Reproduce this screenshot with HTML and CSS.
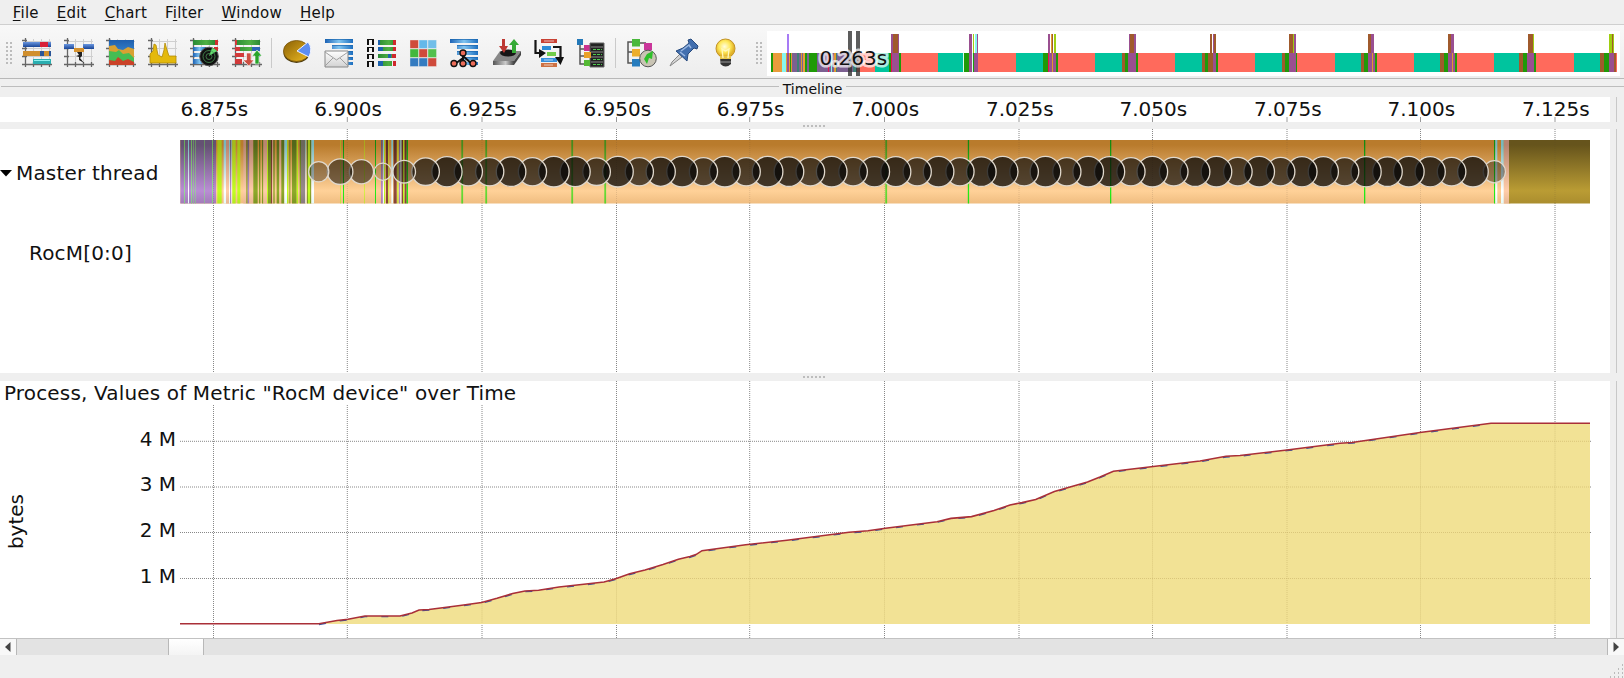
FILE: index.html
```html
<!DOCTYPE html>
<html lang="en">
<head>
<meta charset="utf-8">
<title>Timeline</title>
<link rel="stylesheet" href="styles.css">
</head>
<body>
<svg class="defs" width="0" height="0" aria-hidden="true">
  <defs>
    <linearGradient id="blue" x1="0" x2="1"><stop offset="0" stop-color="#1d62b5"/><stop offset=".5" stop-color="#7fc4f0"/><stop offset="1" stop-color="#1d6fc0"/></linearGradient>
    <linearGradient id="royal" x1="0" x2="0" y1="0" y2="1"><stop offset="0" stop-color="#6a97e0"/><stop offset="1" stop-color="#1a4596"/></linearGradient>
    <linearGradient id="green" x1="0" x2="1"><stop offset="0" stop-color="#2a8a35"/><stop offset=".6" stop-color="#4fb043"/><stop offset="1" stop-color="#2a8a35"/></linearGradient>
    <linearGradient id="gold" x1="0" x2="1" y1="0" y2="1"><stop offset="0" stop-color="#8a6005"/><stop offset="1" stop-color="#eebb22"/></linearGradient>
    <linearGradient id="sky" x1="0" x2="0" y1="0" y2="1"><stop offset="0" stop-color="#1f5fae"/><stop offset="1" stop-color="#4aa3e6"/></linearGradient>
    <radialGradient id="bulb" cx=".45" cy=".4"><stop offset="0" stop-color="#fffde0"/><stop offset=".6" stop-color="#ffe95a"/><stop offset="1" stop-color="#e2b32a"/></radialGradient>
    <linearGradient id="paper" x1="0" x2="0" y1="0" y2="1"><stop offset="0" stop-color="#fff"/><stop offset="1" stop-color="#d2d2d2"/></linearGradient>
    <linearGradient id="metal" x1="0" x2="1"><stop offset="0" stop-color="#555"/><stop offset=".6" stop-color="#ccc"/><stop offset="1" stop-color="#444"/></linearGradient>
    <g id="mesh" fill="none"><path d="M11.5 1V28M19.5 1V28M27.5 1V28M3 3.5H29M3 10.5H29M3 18.5H29" stroke="#cfcfcf"/><path d="M3.5 0V29M0 26.5H30M0 2.5H5M0 10.5H5M0 18.5H5M11.5 24V29M19.5 24V29M27.5 24V29" stroke="#666" stroke-width="1.3"/></g>
    <g id="lines"><path d="M0 1H28V5H0zM7 7H28V11H7zM7 13H28V17H7zM12 19H28V22H12zM14 24H28V27H14z" fill="url(#blue)"/><path d="M0 1.5H28M7 7.5H28M7 13.5H28M12 19.5H28" stroke="#1a65af" stroke-width=".7"/></g>
  </defs>
</svg>

<nav class="menu">
  <span><u>F</u>ile</span><span><u>E</u>dit</span><span><u>C</u>hart</span><span>F<u>i</u>lter</span><span><u>W</u>indow</span><span><u>H</u>elp</span>
</nav>

<header class="toolbar">
  <i class="grip"></i>
  <div class="icons">
    <svg viewBox="0 0 30 30"><use href="#mesh"/><path d="M1 4H29V9H1z" fill="url(#royal)"/><path d="M18 4H26V9H18z" fill="#d82038"/><path d="M1 13H29V18H1z" fill="#d08f2e"/><path d="M18 13H22V18H18zM27 13H29V18H27z" fill="#2a5598"/><path d="M11 21H29V26H11z" fill="#2baeb0"/><path d="M12 22.5H28" stroke="#8df0ef"/></svg>
    <svg viewBox="0 0 30 30"><use href="#mesh"/><path d="M0 6H10V11H0zM19 6H30V11H19z" fill="url(#royal)"/><path d="M10 10H20V14H10z" fill="#d6922e"/><path d="M13 14H18V18L16 20 20 25 15 22 15 19 12 18 15 17z" fill="#222"/></svg>
    <svg viewBox="0 0 30 30"><use href="#mesh"/><path d="M3 2H28V27H3z" fill="url(#sky)"/><path d="M3 8L9 7 12 11 17 12 22 9 28 11V22H3z" fill="#d8a132"/><path d="M3 13L10 14 13 12 17 16 23 15 28 20V26H3z" fill="#45bd53"/><path d="M3 22L9 23 12 19 17 23 22 21 28 24V27H3z" fill="#ca4228"/></svg>
    <svg viewBox="0 0 30 30"><use href="#mesh"/><path d="M2 25V16L5 13 6 6 8 7 10 17 14 19 16 12 17 5 19 12 21 18 28 18V25z" fill="#e4b90c" stroke="#b38b05" stroke-width=".8"/></svg>
    <svg viewBox="0 0 30 30"><use href="#mesh"/><path d="M3 2H25V7H3z" fill="url(#green)"/><path d="M25 2H28V7H25zM24 9H28V13H24z" fill="#cf3030"/><path d="M3 9H16V13H3zM3 15H12V19H3zM3 21H12V26H3z" fill="url(#blue)"/><circle cx="19" cy="18.500" r="9.300" fill="#111" stroke="#555"/><path d="M19 18L27 13A9 9 0 0 0 22 10z" fill="#65e070"/><g fill="none" stroke="#4a9355" stroke-width=".8"><circle cx="19" cy="18.500" r="3"/><circle cx="19" cy="18.500" r="6"/></g></svg>
    <svg viewBox="0 0 30 30"><use href="#mesh"/><path d="M3 2H28V7H3zM8 9H20V13H8z" fill="url(#green)"/><path d="M3 2H5V7H3zM3 9H8V13H3zM3 15H12V19H3zM3 21H10V26H3z" fill="#d23a3a"/><path d="M20 9H28V13H20zM23 15H28V19H23z" fill="#2b66b5"/><path d="M14.500 15H19V22H22L17 28 11 22H14.500z" fill="#ce4f42" stroke="#fff" stroke-width=".6"/><path d="M23 26V18H20L25 12 30 18H27V26z" fill="#28a42b" stroke="#fff" stroke-width=".6"/></svg>
  </div>
  <i class="sep"></i>
  <div class="icons">
    <svg viewBox="0 0 30 30"><ellipse cx="14.500" cy="15" rx="13" ry="10" fill="#4c3c10"/><ellipse cx="14.500" cy="13" rx="13" ry="10.500" fill="url(#gold)" stroke="#795407" stroke-width=".8"/><path d="M15 13L26 4Q31 10 27 19z" fill="#5d8df0" stroke="#f0f3ff"/></svg>
    <svg viewBox="0 0 30 30"><g transform="translate(1 0)"><use href="#lines"/></g><path d="M1 13H24V29H1z" fill="url(#paper)" stroke="#888"/><path d="M1 14L12.500 22 24 14M1 28L9 20M24 28L16 20" fill="none" stroke="#a0a0a0"/></svg>
    <svg viewBox="0 0 30 30"><path d="M1 1H3V7H1zM6 1H8V7H6zM1 9H3V14H1zM6 9H8V14H6zM1 16H3V21H1zM6 16H8V21H6zM1 23H3V29H1zM6 23H8V29H6zM1 1H8V2H1zM1 9H8V10H1zM1 16H8V17H1zM1 23H8V24H1z" fill="#111"/><path d="M12 2H30V7H12zM16 9H29V13H16zM12 16H30V20H12zM17 23H26V28H17z" fill="url(#green)"/><path d="M12 2H14V7H12zM12 9H17V13H12zM22 16H25V20H22zM12 23H17V28H12z" fill="#1d63ae"/><path d="M27 2H30V7H27zM27 9H30V13H27zM26 16H30V20H26zM27 23H30V28H27z" fill="#cf282d"/></svg>
    <svg viewBox="0 0 30 30"><g stroke="#eee" stroke-width=".4"><path d="M2 2H10.500V10.500H2zM11 11H19.500V19.500H11zM20 20H28.500V28.500H20z" fill="#cf4a3b"/><path d="M11 2H19.500V10.500H11z" fill="#65b8ea"/><path d="M20 2H28.500V10.500H20z" fill="#71bee9"/><path d="M2 11H10.500V19.500H2z" fill="#42b83d"/><path d="M20 11H28.500V19.500H20z" fill="#54c04d"/><path d="M2 20H10.500V28.500H2zM11 20H19.500V28.500H11z" fill="#347bc0"/></g></svg>
    <svg viewBox="0 0 30 30"><use href="#lines"/><path d="M13 15V20L5 26M13 18L22 26M13 17V26" fill="none" stroke="#111" stroke-width="2"/><g fill="#ed6d59" stroke="#111" stroke-width="1.400"><circle cx="13" cy="15" r="3"/><circle cx="4" cy="25.500" r="3"/><circle cx="13" cy="25.500" r="3"/><circle cx="23" cy="25.500" r="3"/></g></svg>
    <svg viewBox="0 0 30 30"><path d="M1 23L8 13H29L22 23z" fill="#888"/><path d="M1 23H22V27H1z" fill="url(#metal)"/><path d="M22 23L29 13V17L22 27z" fill="#444"/><ellipse cx="16" cy="15" rx="8" ry="3.500" fill="#151515"/><path d="M10 1H13V8H16L12 15 7 8H10z" fill="#bd3832"/><path d="M20 15V7H17L22 1 27 7H24V15z" fill="#35aa36"/></svg>
    <svg viewBox="0 0 30 30"><path d="M7 1H23V5H7z" fill="#c84134"/><path d="M8 8H17V12H8z" fill="#2e8dd8"/><path d="M13 14H22V18H13z" fill="#71cc49"/><path d="M7 20H23V24H7z" fill="#348fdd"/><path d="M7 25H23V29H7z" fill="#cc7144"/><path d="M10 3H20M10 22H19M10 27H19" stroke="#fff" stroke-opacity=".65"/><path d="M1.500 2V15H7M19 9H26.500V20" fill="none" stroke="#151515" stroke-width="2.200"/><path d="M5 11L12 15 5 20zM21 19H30L26.500 27z" fill="#111"/></svg>
    <svg viewBox="0 0 30 30"><path d="M4 7V26H9M4 11H9M4 18H9" fill="none" stroke="#555" stroke-width="1.500"/><path d="M1 1H7V7H1z" fill="#2278b8"/><path d="M8 7H14V13H8z" fill="#c8328f"/><path d="M14 5H28V29H14z" fill="#222" stroke="#666"/><path d="M15 9H27M15 14H27M15 19H27M15 24H27" stroke="#888"/><path d="M17 11.500H26M17 16.500H26M17 21.500H26M17 26.500H26" stroke="#4fc94f" stroke-dasharray="3 1"/><path d="M8 14H15V20H8z" fill="#eaa127"/><path d="M8 22H14V28H8z" fill="#54b934"/></svg>
  </div>
  <i class="sep"></i>
  <div class="icons last">
    <svg viewBox="0 0 30 30"><path d="M7 4H1V25H6M1 14H6M13 5H19" fill="none" stroke="#555" stroke-width="1.500"/><path d="M5 1H13V8.500H5z" fill="#48b83a"/><path d="M5 11H13V18.500H5z" fill="#ecae2c"/><path d="M5 21H13V28.500H5z" fill="#267cbe"/><path d="M17 5H25V12H17z" fill="#ca369b"/><circle cx="21" cy="20.500" r="8.300" fill="#c9c4b4" stroke="#555"/><path d="M17 21L20 16 26 13 25 21 22 20 20 26z" fill="#2ec02a"/></svg>
    <svg viewBox="0 0 30 30"><path d="M1 28L3 24 11 16 13 19z" fill="#d5d5d5" stroke="#888"/><path d="M7 13L14 10 20 5 19 2 22 1 29 8 28 11 25 10 19 16 18 23z" fill="#426faf" stroke="#274a7d"/><path d="M12 13L20 7 22 10M11 14L16 18" fill="none" stroke="#9ab8e2" stroke-width="1.500"/></svg>
    <svg viewBox="0 0 30 30"><path d="M9 18H20V26Q14.500 31 9.500 26z" fill="#333"/><path d="M9 24H20" stroke="#999"/><circle cx="14.500" cy="10.500" r="9.500" fill="url(#bulb)" stroke="#c29325"/><path d="M9 18H20V21H9z" fill="#e8c84c"/><path d="M12 20L11 11 14.500 13 18 11 17 20" fill="none" stroke="#fff9bd" stroke-width="1.300"/></svg>
  </div>
  <i class="grip"></i>
  <svg class="overview" id="overview" viewBox="767 31 853 45" shape-rendering="crispEdges"></svg>
</header>

<div class="dock-title"><span>Timeline</span></div>

<main>
  <section class="ruler pane">
    <svg class="wide" id="ruler" viewBox="0 97 1610 25"></svg>
  </section>
  <div class="splitter"><i></i></div>
  <section class="threads pane">
    <div class="names">
      <div class="master"><svg viewBox="0 0 12 7"><path d="M0 0H12L6 6.500z"/></svg>Master thread</div>
      <div class="rocm">RocM[0:0]</div>
    </div>
    <svg class="plot" id="threads" viewBox="180 129 1430 244"></svg>
  </section>
  <div class="splitter lower"><i></i></div>
  <section class="metric pane">
    <h1>Process, Values of Metric "RocM device" over Time</h1>
    <div class="chart">
      <div class="unit"><span>bytes</span></div>
      <div class="ticks"><span>4 M</span><span>3 M</span><span>2 M</span><span>1 M</span></div>
      <svg class="plot" id="metric" viewBox="180 405 1430 233"></svg>
    </div>
  </section>
</main>

<div class="scrollbar">
  <span class="arrow"><svg viewBox="0 0 6 10"><path d="M5.500 0V10L0 5z"/></svg></span>
  <span class="trough before"></span><span class="handle"></span><span class="trough after"></span>
  <span class="arrow"><svg viewBox="0 0 6 10"><path d="M.5 0V10L6 5z"/></svg></span>
</div>
<footer><svg viewBox="0 0 14 14"><path d="M12 1h1M8 5h1M12 5h1M4 9h1M8 9h1M12 9h1M0 13h1M4 13h1M8 13h1M12 13h1" stroke="#aaa" stroke-width="1.500"/></svg></footer>
<script src="charts.js"></script>
</body>
</html>
```
FILE: styles.css
```css
* { box-sizing: border-box; }
body {
  margin: 0;
  width: 1624px;
  height: 678px;
  overflow: hidden;
  display: flex;
  flex-direction: column;
  background: #efefef;
  color: #111;
  font-family: "DejaVu Sans", sans-serif;
  font-size: 20px;
}
svg { display: block; flex: none; }
.defs { position: absolute; }
.menu {
  height: 25px;
  padding-left: 12.800px;
  display: flex;
  gap: 18.100px;
  font-size: 15px;
  letter-spacing: 0.200px;
  line-height: 26px;
  border-bottom: 1px solid #cfcfcf;
  flex: none;
}
.menu u { text-underline-offset: 2px; text-decoration-thickness: 1px; }
.toolbar {
  height: 54px;
  display: flex;
  align-items: center;
  padding: 2px 0 0 6px;
  background: linear-gradient(#f8f8f8, #ededed);
  border-bottom: 1.500px solid #b8b8b8;
  flex: none;
}
.grip {
  width: 7px;
  height: 23px;
  background: radial-gradient(circle, #bcbcbc 0.800px, transparent 1.100px) -1px 0 / 4px 4px;
}
.icons { display: flex; gap: 12px; margin-left: 9px; }
.icons svg { width: 30px; height: 30px; }
.sep { width: 1px; height: 30px; background: #cacaca; margin-left: 9px; }
.icons + .sep + .icons { margin-left: 10px; }
.icons + .sep + .icons.last { margin-left: 11px; }
.icons.last + .grip { margin-left: 15px; }
.overview { width: 853px; height: 45px; margin: 2px 0 0 4px; background: #fff; }
.dock-title {
  height: 18px;
  display: flex;
  align-items: center;
  gap: 4px;
  font-size: 14px;
  line-height: 16px;
  padding-left: 1px;
  flex: none;
}
.dock-title span { padding-top: 1px; }
.dock-title::before, .dock-title::after {
  content: "";
  flex: 1;
  height: 1px;
  background: #bdbdbd;
  margin-bottom: 3px;
}
main { flex: none; width: 1617px; }
.pane { position: relative; background: #fff; border-right: 1px solid #c8c8c8; box-shadow: inset -6px 0 #efefef; }
.ruler { height: 25px; }
.wide { width: 1610px; height: 25px; }
.splitter { height: 7px; display: flex; align-items: center; padding-left: 803px; }
.splitter.lower { height: 8px; }
.splitter i { width: 22px; height: 2px; background: repeating-linear-gradient(90deg, #bdbdbd 0 2px, transparent 2px 4px); }
.threads { height: 244px; display: flex; }
.names { width: 180px; padding-top: 29px; line-height: 30px; letter-spacing: 0.180px; }
.master { display: flex; align-items: center; gap: 4px; height: 30px; letter-spacing: 0.180px; white-space: nowrap; }
.master svg { width: 12px; height: 7px; }
.rocm { padding: 50px 0 0 29px; }
.plot { width: 1430px; }
.metric { height: 257px; }
.metric h1 { margin: 0; padding-left: 4px; height: 24px; font-size: 20px; font-weight: 400; line-height: 24px; letter-spacing: 0.155px; }
.chart { display: flex; height: 233px; }
.unit { width: 32px; display: flex; align-items: flex-end; padding: 0 0 89px 2px; }
.unit span { writing-mode: vertical-rl; transform: rotate(180deg); line-height: 28px; }
.ticks { width: 148px; padding: 11.500px 4px 0 0; text-align: right; line-height: 45.700px; display: flex; flex-direction: column; }
.scrollbar { height: 17px; display: flex; background: #e3e3e3; border-top: 1px solid #c2c2c2; flex: none; }
.arrow { width: 16px; display: flex; align-items: center; justify-content: center; background: #f8f8f8; }
.arrow svg { width: 6px; height: 10px; fill: #444; }
.trough { border: solid #b8b8b8; border-width: 0 1px; }
.before { width: 153px; }
.handle { width: 34px; background: linear-gradient(#fff, #f4f4f4); }
.after { flex: 1; }
footer { flex: 1; display: flex; justify-content: flex-end; align-items: flex-end; }
footer svg { width: 14px; height: 14px; }
.axis { fill: #111; text-anchor: middle; }
.duration { fill: #111; stroke: #fff; stroke-opacity: .7; stroke-width: 5px; stroke-linejoin: round; paint-order: stroke; }
```
FILE: charts.js
```javascript
const NS = "http://www.w3.org/2000/svg";
function add(parent, name, attrs, text) {
  const el = document.createElementNS(NS, name);
  for (const k in attrs) el.setAttribute(k, attrs[k]);
  if (text) el.textContent = text;
  parent.appendChild(el);
  return el;
}
const byId = id => document.getElementById(id);
const gridX = [213.5, 347.3, 482, 616.5, 749.7, 884.5, 1019, 1152.5, 1287, 1420.5, 1555];

// Overview strip: each entry is [colour key, end position] in thirds of a pixel.
const flat = { r: "#ff6a5c", t: "#00c49e", g: "#1f9a08", p: "#9a4f90", b: "#a05a2c", w: "#d8fff0", y: "#e09a30", o: "#e99c3c", c: "#86f5ee", s: "#7c6091", k: "#3f7f76", l: "#9fce10", n: "#e91050", v: "#a77bf5" };
const overview = byId("overview");
function strip(base, start, items, y, h) {
  let from = start;
  for (const [key, to] of items) {
    if (key !== "_") add(overview, "rect", { x: base + from / 3, y, width: (to - from) / 3, height: h, fill: flat[key] });
    from = to;
  }
}
strip(760, 33, [["g",40],["o",66],["c",77],["y",82],["p",86],["y",90],["g",93],["y",97],["s",112],["k",118],["s",123],["y",126],["s",129],["o",135],["g",140],["s",148],["g",164],["g",171],["s",205],["n",208],["s",213],["c",217],["s",223],["y",228],["k",231],["s",278],["k",290],["r",345],["t",388],["g",393],["n",397],["p",418],["g",423],["r",533],["t",610],["w",613],["g",628],["p",635],["w",638],["g",643],["p",655],["r",768],["t",848],["g",863],["n",867],["p",876],["y",879],["p",888],["g",893],["r",1005],["t",1085],["b",1096],["g",1105],["p",1127],["g",1133],["r",1245],["t",1290]], 53, 19);
strip(1190, 0, [["t",35],["b",46],["g",54],["b",68],["p",78],["g",84],["r",196],["t",275],["b",286],["g",297],["p",317],["g",321],["r",435],["t",512],["b",523],["g",534],["p",545],["y",549],["p",556],["g",560],["r",671],["t",751],["b",762],["g",773],["p",785],["y",789],["p",795],["g",800],["r",911],["t",988],["b",999],["g",1011],["p",1031],["g",1037],["r",1151],["t",1230],["b",1242],["g",1256],["p",1272],["b",1278],["r",1280]], 53, 19);
strip(760, 81, [["v",87],["_",394],["p",399],["b",413],["p",418],["_",627],["p",635],["_",639],["l",643],["_",646],["c",651],["p",654],["_",864],["p",871],["_",873],["y",876],["b",880],["_",882],["l",888],["_",1106],["p",1110],["b",1121],["p",1127]], 34, 19);
strip(1190, 60, [["b",65],["_",69],["p",73],["b",77],["_",297],["b",309],["l",312],["p",317],["_",534],["b",544],["p",553],["_",774],["b",784],["p",793],["_",1014],["b",1028],["l",1032],["_",1257],["l",1265],["b",1270],["l",1273]], 34, 19);
for (const x of [848, 856]) add(overview, "rect", { x, y: 31, width: 4, height: 45, fill: "#333", opacity: .8 });
add(overview, "text", { x: 819.5, y: 65, class: "duration" }, "0.263s");

const ruler = byId("ruler");
["6.875s","6.900s","6.925s","6.950s","6.975s","7.000s","7.025s","7.050s","7.075s","7.100s","7.125s"].forEach((t, i) => {
  add(ruler, "path", { d: `M${gridX[i]} 117V122`, stroke: "#999" });
  add(ruler, "text", { x: gridX[i] + .8, y: 115.6, class: "axis" }, t);
});

function grid(svg, y1, y2) {
  for (const x of gridX) add(svg, "path", { d: `M${x} ${y1}V${y2}`, stroke: "#888", "stroke-dasharray": "1 1" });
}

// Thread activity: shaded stripes, each [colour key, start, end] in thirds of a pixel.
const threads = byId("threads");
grid(threads, 129, 373);
const shades = { o: ["#b97b2c","#ffd198","#efbd80"], q: ["#66541c","#ba9c34","#aa8d2e"], p: ["#645173","#b98dd4","#a27bb9"], h: ["#b88470","#ffcdaa","#e8b794"], l: ["#a3bd18","#c3ff20","#b2eb20"], g: ["#148a10","#22ee18","#28dc18"], e: ["#6aab5c","#98dc96","#82c882"], c: ["#78b8bd","#fff","#e4fafa"], v: ["#53671b","#8faa2b","#7c9523"], s: ["#6a675c","#988a8e","#887a7e"], b: ["#572b22","#944c3c","#824335"], m: ["#478a1c","#67db36","#5bd22d"] };
const defs = add(threads, "defs", {});
for (const k in shades) {
  const lg = add(defs, "linearGradient", { id: "shade-" + k, x1: 0, y1: 0, x2: 0, y2: 1 });
  [[0, 0], [.08, 0], [.8, 1], [1, 2]].forEach(([o, i]) => add(lg, "stop", { offset: o, "stop-color": shades[k][i] }));
}
function stripe(k, x, w) { add(threads, "rect", { x, y: 140, width: w, height: 63.5, fill: `url(#shade-${k})` }); }
stripe("o", 180.3, 1330);
stripe("q", 1509, 81);
const activity = "p31-138 e42-45 c54-57 e63-66 e69-71 e76-78 e102-104 e126-129 o138-142 l142-155 c161-168 h168-178 c177-180 p180-184 c184-187 l187-197 l202-211 h220-229 v229-233 p233-238 h238-250 v250-263 v267-271 v276-280 h280-291 l291-294 v294-303 b303-306 h306-310 v310-314 v320-328 h328-334 v334-343 c343-351 l351-355 v358-361 v366-380 l380-384 v389-393 s393-406 c406-409 v411-414 l414-420 v420-424 c424-432 l511-513 g519-522 l582-584 g615-618 p633-638 c639-642 l642-645 b648-654 l655-657 c664-669 b671-680 l682-685 p687-691 c691-695 b695-699 l699-703 b704-710 g710-714";
for (const item of activity.split(" ")) {
  const [a, b] = item.slice(1).split("-").map(Number);
  stripe(item[0], 170 + a / 3, (b - a) / 3);
}
for (const x of [461.3, 485.3, 571.3, 604.3, 885.3]) stripe("m", x, 1.8);
for (const x of [967.8, 1110, 1364]) stripe("g", x, 1.3);
stripe("g", 1494, 1.2); stripe("c", 1495.3, 2); stripe("c", 1501, 2.7); stripe("h", 1504, 5);
for (const x of gridX) add(threads, "path", { d: `M${x} 140V203.500`, stroke: "#543", "stroke-opacity": .15, "stroke-dasharray": "1 1" });

const radii = [10.3,13,12.3,8.8,11.5,14,15.3,14.3,14.3,15,14.3,15.5,15.2,14,15.5,14.3,14.8,15.5,14.3,15.5,14.3,15.5,15,14.5,15.5,14.5,15.3,15.2,14.3,15.5,14.3,15,15.5,14.5,15.5,14.3,15.5,15.3,14.3,15.5,14.5,15,15.5,14.5,15.5,14.5,15.3,15.3,14.3,15.3,15,15.5,15.3,14.5,15.5,11.3];
for (let i = radii.length - 1; i >= 0; i--) {
  const r = radii[i];
  const alpha = r < 9 ? .15 : r < 11 ? .33 : r < 12 ? .38 : r < 13.5 ? .53 : r < 14.8 ? .68 : .76;
  add(threads, "circle", { cx: 318.7 + i * 21.375, cy: 171.7, r: r - .2, fill: "#080808", "fill-opacity": alpha, stroke: "#e0d8cc", "stroke-width": 1.3 });
}

// Metric curve
const metric = byId("metric");
const titleEnd = 516;
grid(metric, 405, 638);
for (const x of gridX) if (x > titleEnd) add(metric, "path", { d: `M${x} 381V405`, stroke: "#888", "stroke-dasharray": "1 1" });
metric.style.overflow = "visible";
for (const y of [441.3, 487, 532.5, 578.5]) add(metric, "path", { d: `M180 ${y}H1591`, stroke: "#888", "stroke-dasharray": "1 1" });
const rise = "319,623.8 337,620.5 348,619.2 365,616 400,616 412,613 419,610 429,609.5 460,605.5 481.600,602.5 497,598.3 512.700,593.5 525,591 538.600,590.2 559,587 604,582 615,579 629.700,573.8 645,570 663,564.5 678.400,559.3 690,556.6 696,554.6 702,550.7 745.700,544.8 787,540.2 849,532.3 868,530.8 885.500,528.2 937,521.7 951,518.4 971.500,516.6 994,510.6 1010,504.9 1022,502.6 1035.700,499.5 1054.400,491.5 1087.500,482 1100,477 1113.400,471.2 1180.700,463.3 1200,461 1226,456.3 1240,455.5 1287,450 1340,443.3 1352,442.5 1420,432.5 1491,423.3";
const pts = "180,623.8 " + rise + " 1590,423.3";
add(metric, "polygon", { points: pts + " 1590,624 319,624", fill: "#f2e295" });
for (const x of gridX.slice(1)) {
  const seg = pts.split(" ").map(p => p.split(",").map(Number));
  const n = seg.findIndex(p => p[0] > x);
  const [a, b] = [seg[n - 1], seg[n]];
  const y = a[1] + (b[1] - a[1]) * (x - a[0]) / (b[0] - a[0]);
  add(metric, "path", { d: `M${x} ${y}V623`, stroke: "#bca45c", "stroke-opacity": .4, "stroke-dasharray": "1 1" });
}
[[441.3, 1360], [487, 1070], [532.5, 847], [578.5, 616]].forEach(([y, x]) => add(metric, "path", { d: `M${x} ${y}H1590`, stroke: "#bca45c", "stroke-opacity": .45, "stroke-dasharray": "1 1" }));
add(metric, "polyline", { points: rise, fill: "none", stroke: "#3455a5", "stroke-width": 1.3, "stroke-dasharray": "7 14", transform: "translate(0 .7)" });
add(metric, "polyline", { points: pts, fill: "none", stroke: "#a92f38", "stroke-width": 1.6 });
```
